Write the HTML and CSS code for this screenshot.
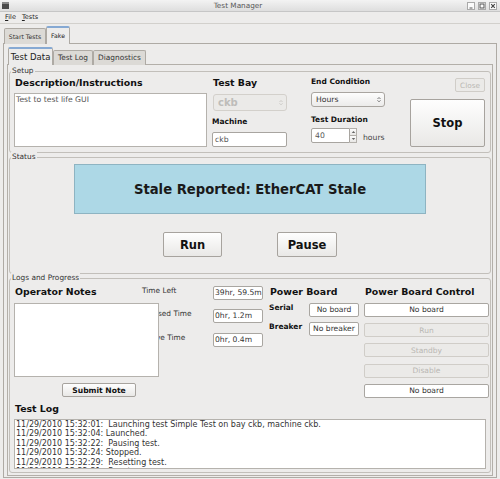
FILE: index.html
```html
<!DOCTYPE html>
<html lang="en">
<head>
<meta charset="utf-8">
<title>Test Manager</title>
<link rel="stylesheet" href="styles.css">
</head>
<body>
<div class="titlebar">
  <span class="app-icon"></span>
  <span class="title">Test Manager</span>
  <div class="wm">
    <span class="wm-btn"><svg width="6" height="6" viewBox="0 0 6 6"><path d="M1.5 5H4.5" stroke="#555" stroke-width="1"/></svg></span>
    <span class="wm-btn"><svg width="6" height="6" viewBox="0 0 6 6"><rect x="1" y="1" width="4" height="4" fill="none" stroke="#555" stroke-width="1"/></svg></span>
    <span class="wm-btn"><svg width="6" height="6" viewBox="0 0 6 6"><path d="M1.2 1.2L4.8 4.8M4.8 1.2L1.2 4.8" stroke="#444" stroke-width="1.2"/></svg></span>
  </div>
</div>
<div class="menubar"><span class="menu"><u>F</u>ile</span><span class="menu"><u>T</u>ests</span></div>
<div class="tabbar outer-tabs"><span class="otab start">Start Tests</span><span class="otab sel fake">Fake</span></div>
<div class="outer-pane">
  <div class="tabbar inner-tabs"><span class="itab sel t-data">Test Data</span><span class="itab t-log">Test Log</span><span class="itab t-diag">Diagnostics</span></div>
  <div class="inner-pane">
    <section class="group setup">
      <div class="gtitle">Setup</div>
      <div class="setup-row">
        <div class="col desc">
          <div class="h1">Description/Instructions</div>
          <div class="textarea desc-text">Test to test life GUI</div>
        </div>
        <div class="col bay">
          <div class="h1">Test Bay</div>
          <div class="select disabled bay-sel"><span>ckb</span><svg width="4" height="7" viewBox="0 0 4 7"><path d="M0.5 3L2 1.5L3.5 3M0.5 4.3L2 5.8L3.5 4.3" fill="none" stroke="#c4c2be" stroke-width="0.8"/></svg></div>
          <div class="h2 machine-l">Machine</div>
          <div class="input machine">ckb</div>
        </div>
        <div class="col endc">
          <div class="h2 endc-l">End Condition</div>
          <div class="select hours"><span>Hours</span><svg width="4" height="7" viewBox="0 0 4 7"><path d="M0.5 3L2 1.5L3.5 3M0.5 4.3L2 5.8L3.5 4.3" fill="none" stroke="#555" stroke-width="0.8"/></svg></div>
          <div class="h2 dur-l">Test Duration</div>
          <div class="spin-row">
            <div class="spin">
              <span class="spin-val">40</span>
              <span class="spin-arrows">
                <span class="sa"><svg width="5" height="4" viewBox="0 0 5 4"><path d="M0.8 3L2.5 1L4.2 3Z" fill="#666"/></svg></span>
                <span class="sa"><svg width="5" height="4" viewBox="0 0 5 4"><path d="M0.8 1L2.5 3L4.2 1Z" fill="#666"/></svg></span>
              </span>
            </div>
            <span class="unit">hours</span>
          </div>
        </div>
        <div class="col actions">
          <div class="btn disabled close">Close</div>
          <div class="btn stop">Stop</div>
        </div>
      </div>
    </section>

    <section class="group status">
      <div class="gtitle">Status</div>
      <div class="banner">Stale Reported: EtherCAT Stale</div>
      <div class="status-btns">
        <div class="btn big run">Run</div>
        <div class="btn big pause">Pause</div>
      </div>
    </section>

    <section class="group logs">
      <div class="gtitle">Logs and Progress</div>
      <div class="logs-top">
        <div class="notes">
          <div class="h1 h-notes">Operator Notes</div>
          <div class="textarea notes-text"></div>
          <div class="btn submit">Submit Note</div>
        </div>
        <div class="times">
          <div class="trow"><span class="tlabel">Time Left</span><span class="field tval">39hr, 59.5m</span></div>
          <div class="trow"><span class="tlabel">Elapsed Time</span><span class="field tval">0hr, 1.2m</span></div>
          <div class="trow"><span class="tlabel">Active Time</span><span class="field tval">0hr, 0.4m</span></div>
        </div>
        <div class="power">
          <div class="h1 h-power">Power Board</div>
          <div class="prow"><span class="plabel">Serial</span><span class="field pval">No board</span></div>
          <div class="prow"><span class="plabel">Breaker</span><span class="field pval">No breaker</span></div>
        </div>
        <div class="control">
          <div class="h1 h-power">Power Board Control</div>
          <div class="ctl-list">
            <span class="field cval">No board</span>
            <span class="btn disabled cbtn">Run</span>
            <span class="btn disabled cbtn">Standby</span>
            <span class="btn disabled cbtn">Disable</span>
            <span class="field cval">No board</span>
          </div>
        </div>
      </div>
      <div class="h1 h-log">Test Log</div>
      <div class="textarea logbox">
<div class="logline">11/29/2010 15:32:01:  Launching test Simple Test on bay ckb, machine ckb.</div>
<div class="logline">11/29/2010 15:32:04: Launched.</div>
<div class="logline">11/29/2010 15:32:22:  Pausing test.</div>
<div class="logline">11/29/2010 15:32:24: Stopped.</div>
<div class="logline">11/29/2010 15:32:29:  Resetting test.</div>
<div class="logline">11/29/2010 15:32:31:  Reset.</div>
      </div>
    </section>
  </div>
</div>
</body>
</html>
```
FILE: styles.css
```css
* { box-sizing: border-box; }
html, body { margin: 0; padding: 0; }
body {
  width: 500px;
  height: 479px;
  overflow: hidden;
  background: #edeceb;
  font-family: "DejaVu Sans", sans-serif;
  color: #1c1c1c;
}

/* title bar */
.titlebar {
  display: flex;
  align-items: center;
  height: 12px;
  padding: 0 3px 0 2px;
  background: linear-gradient(#f3f3f3, #dedede);
  border-bottom: 1px solid #c6c6c6;
}
.app-icon {
  width: 7px;
  height: 7px;
  background: #4b4b4b;
  border-top: 2px solid #8a8a8a;
}
.title {
  flex: 1;
  text-align: center;
  font-size: 7.3px;
  line-height: 11px;
  color: #585858;
}
.wm { display: flex; gap: 3px; }
.wm-btn {
  width: 8px;
  height: 8px;
  border: 1px solid #a9a9a9;
  background: #fbfbfb;
  display: flex;
  align-items: center;
  justify-content: center;
}

/* menu */
.menubar {
  display: flex;
  gap: 6px;
  height: 12px;
  padding-left: 5px;
  border-bottom: 1px solid #d2d0cc;
  font-size: 6.5px;
  line-height: 11px;
  color: #222;
}

/* tabs */
.tabbar { display: flex; align-items: flex-end; }
.outer-tabs { height: 19px; padding-left: 4px; }
.otab, .itab {
  margin-bottom: -1px;
  text-align: center;
  border: 1px solid #aeaaa4;
  border-bottom: none;
  border-radius: 2px 2px 0 0;
  background: #dcdad6;
  color: #333;
  white-space: nowrap;
}
.otab { font-size: 6.2px; }
.otab.start { width: 42px; height: 16px; line-height: 15px; }
.otab.fake { width: 24px; height: 18px; line-height: 16px; }
.sel {
  position: relative;
  z-index: 1;
  background: #edeceb;
  border-top: 2px solid #86a9d3;
  color: #222;
}
.outer-pane {
  margin-left: 3px;
  width: 494px;
  height: 435px;
  border: 1px solid #aeaaa4;
  padding: 0 3px;
}
.inner-tabs { height: 20px; padding-left: 1px; }
.itab { font-size: 7.4px; height: 15px; line-height: 14px; }
.itab.t-data { width: 45px; height: 18px; line-height: 16px; font-size: 8.5px; }
.itab.t-log { width: 40px; }
.itab.t-diag { width: 53px; }
.inner-pane {
  height: 412px;
  border: 1px solid #b3afa9;
  padding: 0 1px;
}

/* group boxes */
.group {
  border: 1px solid #c2bfba;
  border-radius: 3px;
}
.gtitle {
  width: max-content;
  height: 9px;
  margin: -6px 0 -3px 1px;
  padding: 0 1px;
  background: #edeceb;
  font-size: 7.4px;
  line-height: 9px;
  color: #333;
}
.setup { margin-top: 6px; height: 82px; }
.status { margin-top: 4px; height: 117px; }
.logs { margin-top: 4px; height: 195px; }

.h1 {
  font-weight: bold;
  font-size: 9.4px;
  line-height: 12px;
  margin-top: 5px;
  padding-left: 1px;
  color: #111;
  white-space: nowrap;
}
.h2 {
  font-weight: bold;
  font-size: 7.5px;
  line-height: 10px;
  color: #111;
  white-space: nowrap;
}
.textarea {
  background: #fff;
  border: 1px solid #b5b2ad;
  font-size: 7.7px;
  line-height: 9px;
  color: #555;
  padding: 1px 1px;
}

/* setup */
.setup-row { display: flex; padding-left: 4px; }
.col { display: flex; flex-direction: column; }
.desc { width: 193px; }
.desc-text { margin-top: 4px; height: 54px; }
.bay { width: 75px; margin-left: 5px; }
.select {
  display: flex;
  align-items: center;
  justify-content: space-between;
  border: 1px solid #a9a5a0;
  border-radius: 3px;
  background: linear-gradient(#fdfdfd, #ecebea);
  padding: 0 3px 0 4px;
  font-size: 7.7px;
  color: #333;
}
.select.disabled {
  background: #ebeae8;
  border-color: #d3d0cb;
  color: #bebdba;
  font-weight: bold;
  font-size: 10px;
}
.bay-sel { margin: 5px 0 0 1px; width: 74px; height: 17px; }
.machine-l { margin-top: 6px; }
.input {
  background: #fff;
  border: 1px solid #a8a5a0;
  border-radius: 2px;
  font-size: 7.7px;
  line-height: 13px;
  padding-left: 2px;
  color: #555;
}
.machine { margin-top: 5px; height: 15px; }
.endc { width: 75px; margin-left: 24px; }
.endc-l { margin-top: 5px; }
.hours { margin-top: 5px; width: 74px; height: 15px; }
.dur-l { margin-top: 8px; }
.spin-row { display: flex; align-items: center; margin-top: 3px; height: 15px; }
.spin { display: flex; width: 46px; height: 15px; }
.spin-val {
  flex: 1;
  background: #fff;
  border: 1px solid #a8a5a0;
  border-radius: 2px 0 0 2px;
  font-size: 7.7px;
  line-height: 13px;
  padding-left: 3px;
  color: #555;
}
.spin-arrows { display: flex; flex-direction: column; width: 7px; }
.sa {
  flex: 1;
  display: flex;
  align-items: center;
  justify-content: center;
  border: 1px solid #b3b0ab;
  border-left: none;
  background: linear-gradient(#fbfbfb, #e8e7e5);
}
.sa + .sa { border-top: none; }
.unit { margin-left: 6px; font-size: 7.7px; color: #444; padding-top: 3px; }
.actions { width: 75px; margin-left: 24px; }

/* buttons */
.btn {
  display: flex;
  align-items: center;
  justify-content: center;
  border: 1px solid #a7a39e;
  border-radius: 2px;
  background: linear-gradient(#fefefe, #e9e8e6);
  color: #111;
  white-space: nowrap;
}
.btn.disabled {
  background: #ebeae8;
  border-color: #d0cdc8;
  color: #b9b7b3;
  font-weight: normal;
}
.close { align-self: flex-end; margin-top: 6px; width: 30px; height: 14px; font-size: 7.3px; }
.stop { margin-top: 7px; height: 48px; font-size: 11.5px; font-weight: bold; }

/* status */
.banner {
  margin: 6px 0 0 64px;
  width: 352px;
  height: 50px;
  display: flex;
  align-items: center;
  justify-content: center;
  background: #add8e6;
  border: 1px solid #8eb4c2;
  font-weight: bold;
  font-size: 13.2px;
  color: #1a1a1a;
}
.status-btns { display: flex; justify-content: center; gap: 55px; margin-top: 18px; }
.big { height: 25px; font-size: 11.5px; font-weight: bold; }
.run { width: 59px; }
.pause { width: 60px; }

/* logs */
.logs-top { display: flex; padding-left: 4px; height: 120px; }
.notes { width: 145px; position: relative; z-index: 1; }
.h-notes { margin-top: 7px; }
.notes-text { margin-top: 5px; height: 74px; }
.submit { margin: 6px 0 0 48px; width: 74px; height: 14px; font-size: 7.6px; font-weight: bold; }
.times { margin: 7px 0 0 -17px; display: flex; flex-direction: column; gap: 9.3px; }
.trow { display: flex; height: 14px; }
.tlabel { width: 71px; font-size: 7.4px; line-height: 9px; color: #333; white-space: nowrap; }
.field {
  display: block;
  height: 14px;
  background: #fff;
  border: 1px solid #a9a6a1;
  border-radius: 2px;
  font-size: 7.6px;
  line-height: 12px;
  color: #333;
  white-space: nowrap;
  overflow: hidden;
}
.tval { width: 50px; padding-left: 1px; }
.power { margin-left: 6px; width: 95px; }
.h-power { margin-top: 7px; }
.prow { display: flex; margin-top: 5px; height: 14px; }
.plabel { width: 40px; font-size: 7.5px; font-weight: bold; line-height: 10px; color: #111; }
.pval { width: 50px; text-align: center; }
.control { width: 125px; }
.ctl-list { display: flex; flex-direction: column; gap: 6.2px; margin-top: 5px; }
.cval { width: 125px; text-align: center; }
.cbtn { width: 125px; height: 14px; font-size: 7.5px; }
.h-log { margin: 4px 0 0 4px; }
.logbox {
  margin: 4px 0 0 4px;
  width: 472px;
  height: 50px;
  padding: 0 1px;
  overflow: hidden;
  font-size: 8px;
  line-height: 9.4px;
  color: #333;
}
.logline { white-space: pre; }
```
